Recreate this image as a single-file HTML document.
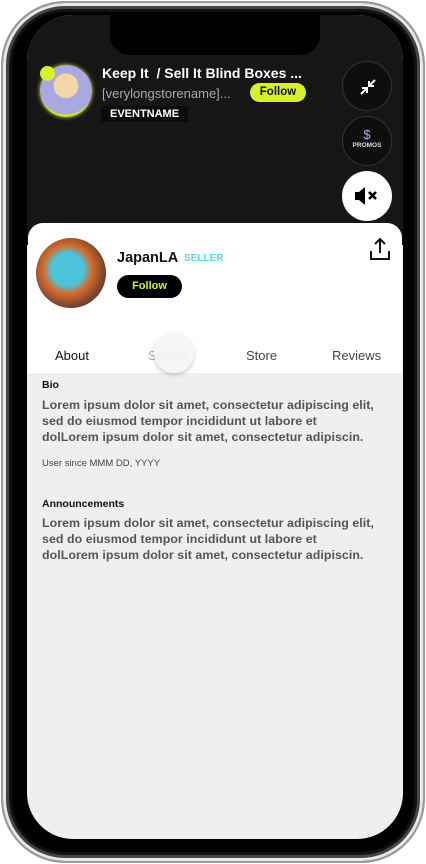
<!DOCTYPE html>
<html><head><meta charset="utf-8"><style>
*{margin:0;padding:0;box-sizing:border-box}
body{width:426px;height:864px;background:#fff;position:relative;overflow:hidden;font-family:"Liberation Sans",sans-serif}
.frame{position:absolute;left:1px;top:1px;width:424px;height:862px;border-radius:64px;background:#000;border:2px solid #9a9a9a;box-shadow:inset 0 0 0 3px #e8e8e8,inset 0 0 0 6px #444,inset 0 0 0 9px #111}
.screen{position:absolute;left:27px;top:15px;width:376px;height:824px;border-radius:46px;overflow:hidden;background:#efeff1}
.dark{position:absolute;left:0;top:0;width:100%;height:230px;background:#161616}
.notch{position:absolute;left:83px;top:0;width:210px;height:40px;background:#000;border-radius:0 0 20px 20px}
.av1{position:absolute;left:13px;top:50px;width:52px;height:52px;border-radius:50%;background:radial-gradient(circle at 50% 40%,#f5d5a8 0 30%,#a9a8e0 31% 70%,#c7e92a 71%);box-shadow:0 0 4px #d9f02a}
.dot{position:absolute;left:13px;top:51px;width:15px;height:15px;border-radius:50%;background:#d6f02a}
.t1{position:absolute;left:75px;top:50px;color:#fff;font-weight:bold;font-size:14px}
.t2{position:absolute;left:75px;top:71px;color:#aaa;font-size:13px}
.f1{position:absolute;left:223px;top:68px;width:56px;height:19px;border-radius:10px;background:#d8f02a;font-weight:bold;font-size:11.5px;text-align:center;line-height:19px;color:#111}
.ev{position:absolute;left:74px;top:91px;background:#0c0c0c;color:#fff;font-weight:bold;font-size:11px;padding:2px 9px}
.cb{position:absolute;width:50px;height:50px;border-radius:50%;left:315px;background:#0e0e0e;border:1px solid #333}
.card{position:absolute;left:1px;top:208px;width:374px;height:150px;background:#fff;border-radius:15px 15px 0 0}
.av2{position:absolute;left:9px;top:223px;width:70px;height:70px;border-radius:50%;background:radial-gradient(ellipse at 45% 45%,#4cc3d8 0 30%,#d66a2a 45%,#5a3a30 75%)}
.name{position:absolute;left:90px;top:235px;font-weight:bold;font-size:14.5px;color:#111}
.sel{position:absolute;left:157px;top:238px;font-weight:bold;font-size:10px;color:#5ed6e0}
.f2{position:absolute;left:90px;top:260px;width:65px;height:23px;border-radius:12px;background:#000;color:#d8f02a;font-weight:bold;font-size:11px;text-align:center;line-height:23px}
.tab{position:absolute;top:333px;font-size:13px;color:#444}
.body{position:absolute;left:15px;color:#555;font-weight:bold;font-size:12.4px;line-height:16px;letter-spacing:.05px}
.h{position:absolute;left:15px;font-weight:bold;font-size:10.5px;color:#111}
</style></head><body>
<div class="frame"></div>
<div class="screen">
 <div class="dark"></div>
 <div class="notch"></div>
 <div class="av1"></div><div class="dot"></div>
 <div class="t1">Keep It &nbsp;/ Sell It Blind Boxes ...</div>
 <div class="t2">[verylongstorename]...</div>
 <div class="f1">Follow</div>
 <div class="ev">EVENTNAME</div>
 <div class="cb" style="top:46px"><svg width="50" height="50" viewBox="0 0 50 50"><path d="M18 32l6-6M19 26h5v5M32 18l-6 6M31 24h-5v-5" stroke="#fff" stroke-width="2" fill="none"/></svg></div>
 <div class="cb" style="top:101px;text-align:center;color:#fff"><div style="color:#c7a8ee;font-size:13px;margin-top:10px">$</div><div style="font-size:6.5px;font-weight:bold;color:#ddd">PROMOS</div></div>
 <div class="cb" style="top:156px;background:#fff;border:none"><svg width="50" height="50" viewBox="0 0 50 50"><path d="M13 21h4l6-5v18l-6-5h-4z" fill="#000"/><path d="M27 21l7 7M34 21l-7 7" stroke="#000" stroke-width="2.6"/></svg></div>
 <div class="card"></div>
 <svg style="position:absolute;left:342px;top:222px" width="22" height="24" viewBox="0 0 22 24"><path d="M11 16V2M6 7l5-5 5 5M2 14v8h18v-8" stroke="#111" stroke-width="2" fill="none"/></svg>
 <div class="av2"></div>
 <div class="name">JapanLA</div><div class="sel">SELLER</div>
 <div class="f2">Follow</div>
 <div class="tab" style="left:28px;color:#111">About</div>
 <div class="tab" style="left:121px;color:#aaa">Shows</div>
 <div style="position:absolute;left:127px;top:318px;width:40px;height:40px;border-radius:50%;background:rgba(245,245,245,.9);box-shadow:0 2px 5px rgba(0,0,0,.2)"></div>
 <div class="tab" style="left:219px">Store</div>
 <div class="tab" style="left:305px">Reviews</div>
 <div class="h" style="top:364px">Bio</div>
 <div class="body" style="top:382px">Lorem ipsum dolor sit amet, consectetur adipiscing elit,<br>sed do eiusmod tempor incididunt ut labore et<br>dolLorem ipsum dolor sit amet, consectetur adipiscin.</div>
 <div style="position:absolute;left:15px;top:443px;font-size:9.5px;color:#444">User since MMM DD, YYYY</div>
 <div class="h" style="top:483px">Announcements</div>
 <div class="body" style="top:500px">Lorem ipsum dolor sit amet, consectetur adipiscing elit,<br>sed do eiusmod tempor incididunt ut labore et<br>dolLorem ipsum dolor sit amet, consectetur adipiscin.</div>
</div>
</body></html>
